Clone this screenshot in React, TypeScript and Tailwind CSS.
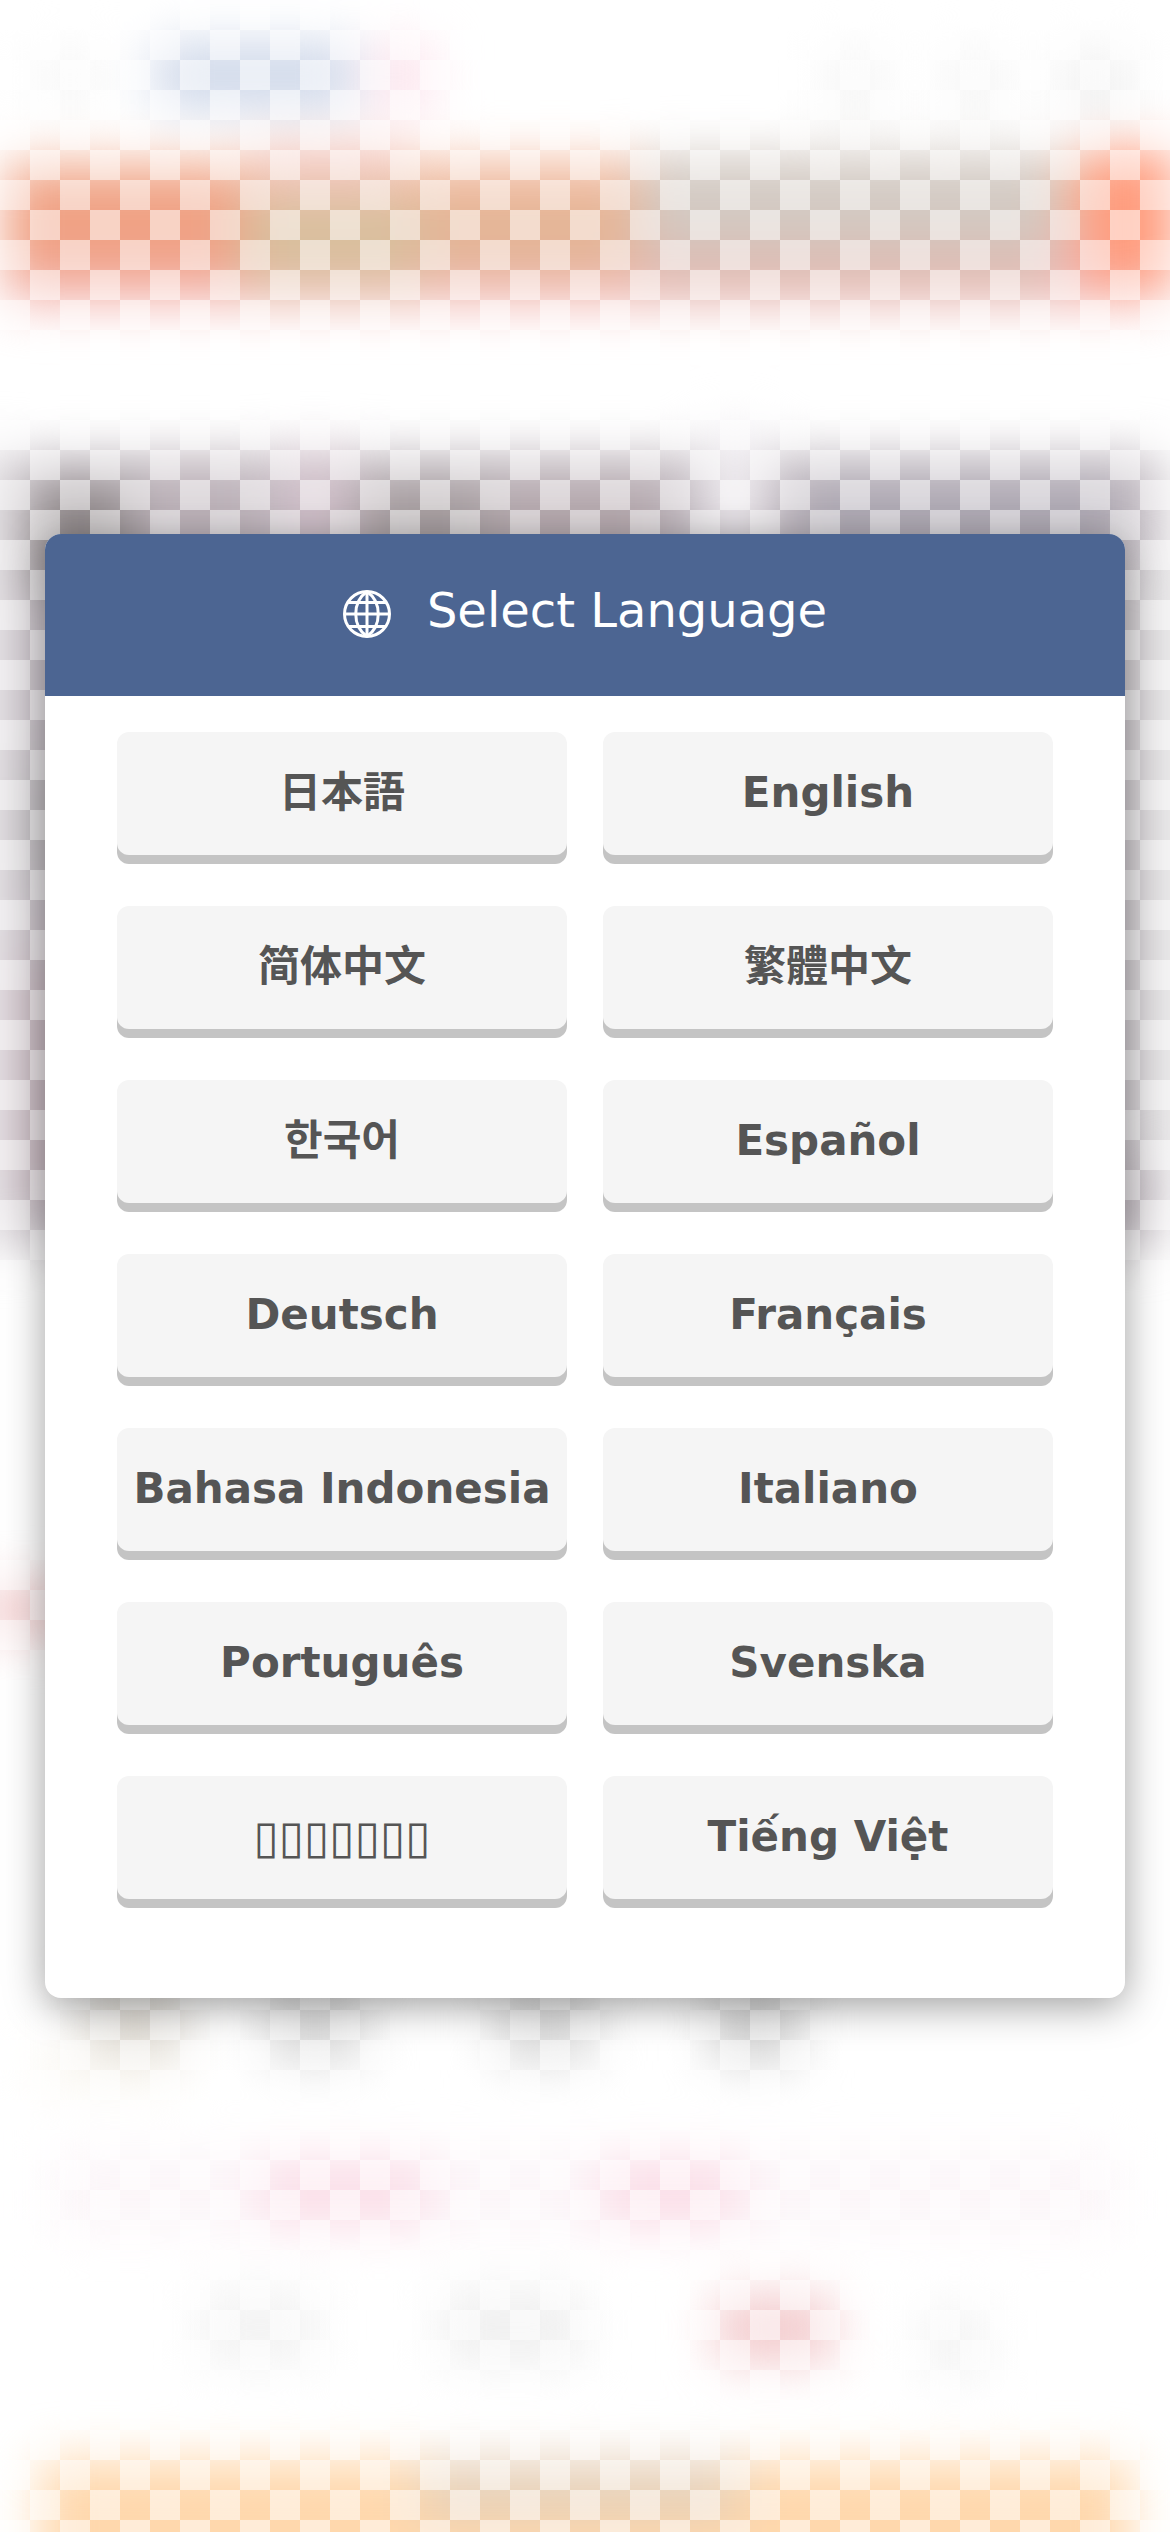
import { useState } from "react";

const LANGUAGES = [
  { code: "ja", label: "日本語", font: "text-[42px] font-bold font-['DejaVu_Sans','Noto_Sans_CJK_JP',sans-serif]" },
  { code: "en", label: "English", font: "text-[42px] font-bold" },
  { code: "zh-Hans", label: "简体中文", font: "text-[42px] font-bold font-['DejaVu_Sans','Noto_Sans_CJK_SC',sans-serif]" },
  { code: "zh-Hant", label: "繁體中文", font: "text-[42px] font-bold font-['DejaVu_Sans','Noto_Sans_CJK_TC',sans-serif]" },
  { code: "ko", label: "한국어", font: "text-[42px] font-bold font-['DejaVu_Sans','Noto_Sans_CJK_KR',sans-serif]" },
  { code: "es", label: "Español", font: "text-[42px] font-bold" },
  { code: "de", label: "Deutsch", font: "text-[42px] font-bold" },
  { code: "fr", label: "Français", font: "text-[42px] font-bold" },
  { code: "id", label: "Bahasa Indonesia", font: "text-[42px] font-bold" },
  { code: "it", label: "Italiano", font: "text-[42px] font-bold" },
  { code: "pt", label: "Português", font: "text-[42px] font-bold" },
  { code: "sv", label: "Svenska", font: "text-[42px] font-bold" },
  { code: "th", label: "▯▯▯▯▯▯▯", font: "text-[46px] font-normal" },
  { code: "vi", label: "Tiếng Việt", font: "text-[42px] font-bold" },
] as const;

// x, y, width, height, fill
type Patch = readonly [number, number, number, number, string];

const PATCHES: Patch[] = [
  // top bar
  [30, 50, 80, 60, "#f8f8f8"],
  [155, 42, 200, 68, "#d0d9ea"],
  [370, 40, 65, 75, "#fde6ee"],
  [825, 50, 60, 70, "#f5f5f5"],
  [945, 50, 60, 70, "#f5f5f5"],
  [1060, 50, 75, 75, "#f2f2f2"],
  // banner
  [5, 160, 1160, 70, "#f4bca2"],
  [5, 225, 1160, 80, "#f4b9b7"],
  [5, 180, 235, 95, "#f0a184"],
  [250, 145, 150, 50, "#f4c6bc"],
  [240, 195, 180, 90, "#d9bf9d"],
  [420, 195, 215, 80, "#e3b596"],
  [640, 155, 420, 110, "#d3cac3"],
  [640, 245, 420, 45, "#dcbab0"],
  [1085, 150, 90, 135, "#ff9b7c"],
  // photo grid
  [10, 455, 1150, 790, "#bfb7be"],
  [30, 485, 100, 100, "#8f8889"],
  [150, 465, 100, 90, "#bcb1b8"],
  [280, 450, 70, 100, "#d0bfc9"],
  [360, 480, 130, 90, "#a69d9f"],
  [500, 480, 160, 80, "#b5a8ad"],
  [705, 425, 60, 120, "#f2eff3"],
  [800, 480, 320, 75, "#ada8b3"],
  [-40, 450, 60, 800, "#e6e3e6"],
  [30, 760, 30, 120, "#aeacae"],
  [20, 960, 40, 240, "#bda9b2"],
  [1130, 560, 60, 600, "#e4e3e4"],
  [-20, 1585, 90, 50, "#f3cccd"],
  // captions
  [85, 1985, 100, 72, "#dad6cf"],
  [30, 2050, 150, 40, "#fbf8f2"],
  [265, 1985, 100, 76, "#d8d8d8"],
  [495, 1985, 100, 76, "#d8d8d8"],
  [710, 1985, 90, 76, "#d0d0d0"],
  [50, 2150, 1070, 85, "#fcf6f9"],
  [260, 2160, 170, 65, "#fbdee8"],
  [600, 2160, 140, 65, "#fbdde7"],
  [200, 2290, 120, 75, "#f3f3f3"],
  [440, 2290, 145, 75, "#f0f0f0"],
  [715, 2295, 120, 68, "#f3cbcd"],
  [920, 2305, 70, 75, "#f4f4f4"],
  // footer banner
  [40, 2460, 1090, 140, "#ffd8ad"],
  [420, 2460, 320, 60, "#e6d0b8"],
];

function Backdrop() {
  return (
    <div className="absolute inset-0 overflow-hidden bg-white" aria-hidden="true">
      <svg
        className="h-full w-full"
        viewBox="0 0 1170 2532"
        preserveAspectRatio="none"
      >
        <defs>
          <filter
            id="soften"
            filterUnits="userSpaceOnUse"
            x="-120"
            y="-120"
            width="1410"
            height="2772"
            colorInterpolationFilters="sRGB"
          >
            <feGaussianBlur stdDeviation="25" />
          </filter>
        </defs>
        <g filter="url(#soften)">
          {PATCHES.map(([x, y, width, height, fill]) => (
            <rect
              key={`${x}-${y}-${width}`}
              x={x}
              y={y}
              width={width}
              height={height}
              fill={fill}
            />
          ))}
        </g>
      </svg>
      <div className="absolute inset-0 bg-[conic-gradient(transparent_25%,rgba(255,255,255,0.52)_0_50%,transparent_0_75%,rgba(255,255,255,0.52)_0)] bg-[length:60px_60px]" />
    </div>
  );
}

function GlobeIcon() {
  return (
    <svg
      className="h-12 w-12"
      viewBox="0 0 48 48"
      fill="none"
      stroke="currentColor"
      strokeWidth="3"
      aria-hidden="true"
    >
      <circle cx="24" cy="24" r="22.5" />
      <path d="M24 1.5v45M1.5 24h45M5 12.5h38M5 36.5h38" />
      <path d="M24 1.5C9 12 9 36 24 46.5M24 1.5C39 12 39 36 24 46.5" />
    </svg>
  );
}

export default function App() {
  const [selected, setSelected] = useState("en");

  return (
    <div className="relative flex min-h-screen items-center justify-center px-[45px] font-['DejaVu_Sans',sans-serif]">
      <Backdrop />

      <section
        role="dialog"
        aria-labelledby="language-title"
        className="relative w-full rounded-2xl bg-white shadow-[0_8px_40px_rgba(0,0,0,0.38)]"
      >
        <header className="flex items-center justify-center gap-9 rounded-t-2xl bg-[#4c6592] pt-[46px] pb-14 text-white">
          <div className="pt-2">
            <GlobeIcon />
          </div>
          <h2 id="language-title" className="text-[48px] leading-[60px]">
            Select Language
          </h2>
        </header>

        <div className="grid grid-cols-2 gap-x-9 gap-y-[51px] px-[72px] pt-9 pb-[99px]">
          {LANGUAGES.map(({ code, label, font }) => (
            <button
              key={code}
              type="button"
              lang={code}
              aria-pressed={selected === code}
              onClick={() => setSelected(code)}
              className={`h-[123px] rounded-xl bg-[#f5f5f5] pb-0.5 leading-[60px] whitespace-nowrap text-[#555] shadow-[0_9px_0_#c4c4c4] ${font}`}
            >
              {label}
            </button>
          ))}
        </div>
      </section>
    </div>
  );
}
